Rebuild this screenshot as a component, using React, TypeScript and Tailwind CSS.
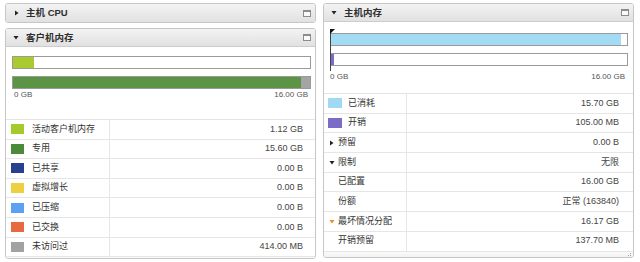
import clsx from "clsx";

const guestLegend = [
  { color: "bg-[#a6c92c]", label: "活动客户机内存", value: "1.12 GB" },
  { color: "bg-[#4b8b37]", label: "专用", value: "15.60 GB" },
  { color: "bg-[#27408f]", label: "已共享", value: "0.00 B" },
  { color: "bg-[#eecf3f]", label: "虚拟增长", value: "0.00 B" },
  { color: "bg-[#5d9ff0]", label: "已压缩", value: "0.00 B" },
  { color: "bg-[#e8693f]", label: "已交换", value: "0.00 B" },
  { color: "bg-[#a2a2a2]", label: "未访问过", value: "414.00 MB" },
];

type HostRow = {
  label: string;
  value: string;
  swatch?: string;
  icon?: "right" | "down" | "warn";
};

const hostRows: HostRow[] = [
  { label: "已消耗", value: "15.70 GB", swatch: "bg-[#9fd9f3]" },
  { label: "开销", value: "105.00 MB", swatch: "bg-[#7b6cc6]" },
  { label: "预留", value: "0.00 B", icon: "right" },
  { label: "限制", value: "无限", icon: "down" },
  { label: "已配置", value: "16.00 GB" },
  { label: "份额", value: "正常 (163840)" },
  { label: "最坏情况分配", value: "16.17 GB", icon: "warn" },
  { label: "开销预留", value: "137.70 MB" },
];

function Arrow({ dir, color = "#222" }: { dir: "right" | "down"; color?: string }) {
  return dir === "right" ? (
    <svg width="5" height="6" viewBox="0 0 5 6" className="block shrink-0">
      <path d="M1 0.5 L4.5 3 L1 5.5 Z" fill={color} />
    </svg>
  ) : (
    <svg width="6" height="5" viewBox="0 0 6 5" className="block shrink-0">
      <path d="M0.5 1 L5.5 1 L3 4.5 Z" fill={color} />
    </svg>
  );
}

function WindowIcon() {
  return (
    <svg width="8" height="7" viewBox="0 0 8 7" className="block">
      <rect x="0.5" y="0.5" width="7" height="6" fill="#fafafa" stroke="#8c8c8c" />
      <line x1="0.5" y1="1.5" x2="7.5" y2="1.5" stroke="#8c8c8c" />
    </svg>
  );
}

function Grip() {
  return (
    <svg width="7" height="7" viewBox="0 0 7 7" className="block">
      <rect x="5" y="1" width="1" height="1" fill="#a0a0a0" />
      <rect x="3" y="3" width="1" height="1" fill="#a0a0a0" />
      <rect x="5" y="3" width="1" height="1" fill="#a0a0a0" />
      <rect x="1" y="5" width="1" height="1" fill="#a0a0a0" />
      <rect x="3" y="5" width="1" height="1" fill="#a0a0a0" />
      <rect x="5" y="5" width="1" height="1" fill="#a0a0a0" />
    </svg>
  );
}

function PanelHeader({ title, open }: { title: string; open: boolean }) {
  return (
    <div
      className={clsx(
        "flex items-center h-[18px] shrink-0 bg-linear-to-b from-[#f3f3f3] to-[#e1e1e1] pl-[7px] pr-[4px]",
        open && "border-b border-[#cdcdcd]"
      )}
    >
      <div className="w-[6px] flex justify-center">
        <Arrow dir={open ? "down" : "right"} />
      </div>
      <span className="ml-[7px] text-[9.5px] font-bold text-[#2e2e2e] leading-none">{title}</span>
      <div className="ml-auto">
        <WindowIcon />
      </div>
    </div>
  );
}

function PanelFooter() {
  return (
    <div className="flex-1 flex items-end justify-end bg-linear-to-b from-[#fbfbfb] to-[#ececec] pr-[1px] pb-[1px]">
      <Grip />
    </div>
  );
}

function Bar({ children }: { children: React.ReactNode }) {
  return (
    <div className="h-[13px] border border-[#9a9a9a] bg-white flex overflow-hidden">{children}</div>
  );
}

function AxisLabels() {
  return (
    <div className="flex justify-between text-[8px] text-[#555] leading-none">
      <span>0 GB</span>
      <span>16.00 GB</span>
    </div>
  );
}

function RowIcon({ icon }: { icon?: HostRow["icon"] }) {
  if (icon === "right") return <Arrow dir="right" />;
  if (icon === "down") return <Arrow dir="down" />;
  if (icon === "warn") return <Arrow dir="down" color="#f08a24" />;
  return null;
}

export default function App() {
  return (
    <div className="w-[640px] h-[262px] bg-white flex gap-[7px] pl-[5px] pt-[3px] font-['Liberation_Sans','Noto_Sans_CJK_SC',sans-serif] text-[#333]">
      {/* 左栏 */}
      <div className="w-[311px] flex flex-col gap-[5px]">
        <div className="border border-[#c6c6c6] rounded-[3px] overflow-hidden">
          <PanelHeader title="主机 CPU" open={false} />
        </div>

        <div className="h-[231px] border border-[#c6c6c6] rounded-[3px] overflow-hidden flex flex-col bg-white">
          <PanelHeader title="客户机内存" open />
          <div className="pt-[9px] pl-[6px] pr-[4px] flex flex-col">
            <Bar>
              <div className="w-[21px] bg-[#a9cb2f]" />
            </Bar>
            <div className="mt-[7px]">
              <Bar>
                <div className="flex-1 bg-[#5a9444]" />
                <div className="w-[9px] bg-[#a4a4a4]" />
              </Bar>
            </div>
            <div className="mt-[2px] pl-[2px] pr-[3px]">
              <AxisLabels />
            </div>
          </div>
          <div className="mt-[20px] border-t border-[#e4e4e4]">
            {guestLegend.map((r) => (
              <div key={r.label} className="flex h-[19.6px] border-b border-[#e6e6e6] text-[9px]">
                <div className="w-[104px] flex items-center pl-[5px] border-r border-[#e6e6e6]">
                  <div className={clsx("w-[13px] h-[10px]", r.color)} />
                  <span className="ml-[8px]">{r.label}</span>
                </div>
                <div className="flex-1 flex items-center justify-end pr-[12px] text-[#444]">{r.value}</div>
              </div>
            ))}
          </div>
          <PanelFooter />
        </div>
      </div>

      {/* 右栏 */}
      <div className="w-[311px] h-[255px] border border-[#c6c6c6] rounded-[3px] overflow-hidden flex flex-col bg-white">
        <PanelHeader title="主机内存" open />
        <div className="pl-[6px] pr-[5px] pt-[7px] flex flex-col relative">
          <div className="absolute left-[6px] top-[7px] w-[1px] h-[42px] bg-[#444]" />
          <svg width="5" height="5" viewBox="0 0 5 5" className="absolute left-[6px] top-[7px]">
            <path d="M0 0 L5 0 L0 5 Z" fill="#111" />
          </svg>
          <div className="mt-[4px]">
            <Bar>
              <div className="w-[98%] bg-[#a4dbf4]" />
            </Bar>
          </div>
          <div className="mt-[7px]">
            <Bar>
              <div className="w-[3px] bg-[#7b6cc6]" />
            </Bar>
          </div>
          <div className="mt-[7px] pr-[3px]">
            <AxisLabels />
          </div>
        </div>
        <div className="mt-[12px] border-t border-[#e4e4e4]">
          {hostRows.map((r) => (
            <div key={r.label} className="flex h-[19.7px] border-b border-[#e6e6e6] text-[9px]">
              <div className="w-[83px] flex items-center pl-[4px] border-r border-[#e6e6e6]">
                {r.swatch ? (
                  <>
                    <div className={clsx("w-[14px] h-[10px]", r.swatch)} />
                    <span className="ml-[6px]">{r.label}</span>
                  </>
                ) : (
                  <>
                    <div className="w-[10px] flex justify-start pl-[1px]">
                      <RowIcon icon={r.icon} />
                    </div>
                    <span>{r.label}</span>
                  </>
                )}
              </div>
              <div className="flex-1 flex items-center justify-end pr-[14px] text-[#444]">{r.value}</div>
            </div>
          ))}
        </div>
        <PanelFooter />
      </div>
    </div>
  );
}
